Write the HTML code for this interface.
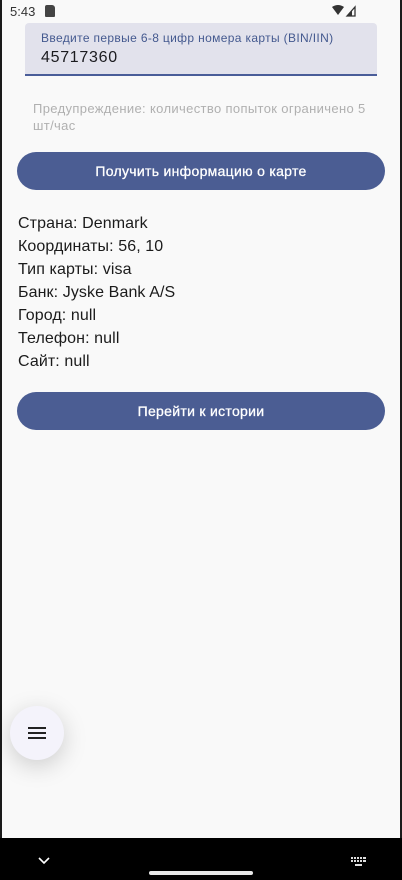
<!DOCTYPE html>
<html><head><meta charset="utf-8"><style>
*{margin:0;padding:0;box-sizing:border-box}
body{width:402px;height:880px;background:#1a1a1a;font-family:"Liberation Sans","Noto Sans CJK SC",sans-serif;position:relative;overflow:hidden}
.scr{position:absolute;left:2px;top:0;width:398px;height:838px;background:#f9f9f9}
.abs{position:absolute}
.field{top:23px;width:352px;height:53px;background:#e2e2ec;border-radius:4px 4px 0 0;border-bottom:2px solid #4a5d99}
.lbl{left:16px;top:8px;font-size:12px;color:#44598f;letter-spacing:.35px}
.val{left:16px;top:26px;font-size:16px;color:#1b1b1f;letter-spacing:.7px}
.warn{top:100px;width:340px;font-size:13px;line-height:17px;color:#b0b0b0;letter-spacing:.35px}
.btn{width:368px;height:38px;border-radius:19px;background:#4b5d93;color:#fff;font-size:14px;text-align:center;line-height:38px;letter-spacing:.3px;-webkit-text-stroke:.3px #fff}
.info{top:212px;font-size:16px;line-height:23px;color:#1b1b1b;letter-spacing:.1px}
.fab{top:706px;width:54px;height:54px;border-radius:27px;background:#f4f3fb;box-shadow:0 6px 24px rgba(0,0,0,.18)}
</style></head><body>
<div class="scr">
<div class="abs" style="left:8px;top:4px;font-size:13px;color:#333">5:43</div>
<div class="abs" style="left:43px;top:5px;width:10px;height:12px;background:#444;border-radius:2px 3px 1px 1px"></div>
<svg class="abs" style="left:330px;top:4px" width="30" height="14" viewBox="0 0 30 14"><path d="M0 3 Q6 -1 12 3 L6 11 Z" fill="#333"/><path d="M15 12 L23 3 L23 12 Z" fill="none" stroke="#333" stroke-width="1.3"/><path d="M15 12 L20 7 L20 12Z" fill="#333"/></svg>
<div class="abs field" style="left:23px"><div class="abs lbl">Введите первые 6-8 цифр номера карты (BIN/IIN)</div><div class="abs val">45717360</div></div>
<div class="abs warn" style="left:31px">Предупреждение: количество попыток ограничено 5 шт/час</div>
<div class="abs btn" style="left:15px;top:152px">Получить информацию о карте</div>
<div class="abs info" style="left:16px">Страна: Denmark<br>Координаты: 56, 10<br>Тип карты: visa<br>Банк: Jyske Bank A/S<br>Город: null<br>Телефон: null<br>Сайт: null</div>
<div class="abs btn" style="left:15px;top:392px">Перейти к истории</div>
<div class="abs fab" style="left:8px"><svg class="abs" style="left:18px;top:20px" width="18" height="14"><rect y="1" width="18" height="2" fill="#222"/><rect y="6" width="18" height="2" fill="#222"/><rect y="11" width="18" height="2" fill="#222"/></svg></div>
</div>
<div class="abs" style="left:0;top:838px;width:402px;height:42px;background:#000"></div>
<svg class="abs" style="left:38px;top:857px" width="12" height="8"><path d="M1 1 L6 6 L11 1" stroke="#fff" stroke-width="1.6" fill="none"/></svg>
<div class="abs" style="left:149px;top:871px;width:104px;height:4px;border-radius:2px;background:#e8e8e8"></div>
<svg class="abs" style="left:351px;top:857px" width="16" height="10"><g fill="#ddd"><rect x="0" y="0" width="2" height="2"/><rect x="3" y="0" width="2" height="2"/><rect x="6" y="0" width="2" height="2"/><rect x="9" y="0" width="2" height="2"/><rect x="12" y="0" width="3" height="2"/><rect x="0" y="3" width="2" height="2"/><rect x="3" y="3" width="2" height="2"/><rect x="6" y="3" width="2" height="2"/><rect x="9" y="3" width="2" height="2"/><rect x="12" y="3" width="3" height="2"/><rect x="4" y="7" width="7" height="2"/></g></svg>
</body></html>
